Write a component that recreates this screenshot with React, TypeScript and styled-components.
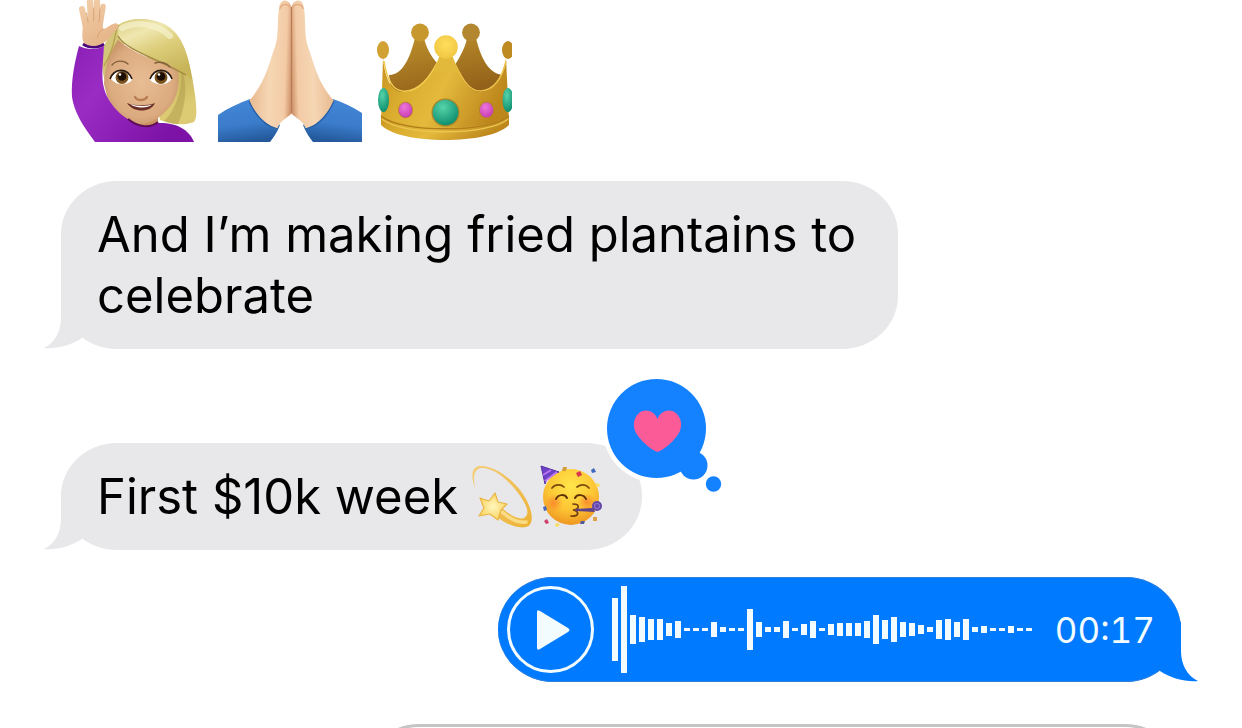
import React from "react";
import styled, { createGlobalStyle, css } from "styled-components";

const GlobalStyle = createGlobalStyle`
  *, *::before, *::after { box-sizing: border-box; }
  body {
    margin: 0;
    background: #ffffff;
    color: #000000;
    font-family: Inter, "Liberation Sans", sans-serif;
  }
`;

const Thread = styled.main`
  display: flex;
  flex-direction: column;
  align-items: flex-start;
  height: 100vh;
  overflow: hidden;
  padding: 0 61px;
`;

const EmojiRow = styled.div`
  display: flex;
  gap: 12px;
  margin: 0 1px 39px;
`;

const BigEmoji = styled.svg`
  display: block;
  width: 144px;
  height: 142px;
`;

const SmallEmoji = styled.svg`
  display: block;
  width: 66px;
  height: 66px;
`;

const bubbleShape = css`
  position: relative;
  flex: none;
  border-radius: 56px / 53px;
`;

const Received = styled.div<{ $gap: number }>`
  ${bubbleShape}
  display: flex;
  align-items: center;
  max-width: 837px;
  padding: 23px 36px;
  margin-bottom: ${(p) => p.$gap}px;
  background: #e8e8ea;
`;

const Message = styled.p`
  margin: 0;
  font-size: 49px;
  line-height: 61px;
`;

const InlineEmojis = styled.span`
  display: flex;
  gap: 3px;
  height: 61px;
  align-items: center;
  margin-left: 13px;
`;

const Voice = styled.div`
  ${bubbleShape}
  align-self: flex-end;
  display: flex;
  align-items: center;
  padding: 9px 26px 9px 9px;
  margin-bottom: 42px;
  background: #007aff;
  color: #f2fcff;
  box-shadow: inset 0 1px 0 #2f80dc, inset 0 -1px 0 #2f80dc;
`;

const Tail = styled.svg<{ $side: "left" | "right" }>`
  position: absolute;
  bottom: 0;
  width: 40px;
  height: 60px;
  ${(p) =>
    p.$side === "left"
      ? css`
          left: -18px;
          fill: #e8e8ea;
        `
      : css`
          right: -18px;
          fill: #007aff;
          transform: scaleX(-1);
        `}
`;

const Reaction = styled.svg`
  position: absolute;
  right: -82px;
  top: -70px;
  width: 124px;
  height: 124px;
`;

const PlayButton = styled.button`
  display: flex;
  align-items: center;
  justify-content: center;
  width: 87px;
  height: 87px;
  padding: 0;
  border: 3px solid #f2fcff;
  border-radius: 50%;
  background: transparent;
  color: inherit;
  cursor: pointer;
`;

const Wave = styled.svg`
  width: 420px;
  height: 87px;
  margin: 0 23px 0 18px;
  fill: #f2fcff;
`;

const Duration = styled.time`
  font-size: 35px;
  line-height: 44px;
  font-variant-numeric: tabular-nums;
`;

const Pending = styled.div`
  ${bubbleShape}
  align-self: flex-end;
  width: 73%;
  height: 106px;
  border: 3px solid #c4c4c6;
`;

const LEVELS = [
  63, 87, 29, 25, 21, 21, 13, 17, 3, 3, 3, 15, 5, 3, 3, 41, 15, 5, 5, 17, 3, 11,
  17, 3, 11, 13, 13, 13, 17, 29, 19, 25, 15, 13, 9, 5, 19, 21, 15, 21, 5, 7, 3,
  3, 7, 3, 3,
];

function BubbleTail({ side }: { side: "left" | "right" }) {
  return (
    <Tail $side={side} viewBox="0 0 40 60" aria-hidden="true">
      <path d="M18 0V29C18 42 12 54 1 59C13 60 27 57 39 49L40 0Z" />
    </Tail>
  );
}

function RaisedHand() {
  return (
    <BigEmoji viewBox="62 0 144 142" role="img" aria-label="Woman raising hand">
      <defs>
        <linearGradient id="sleeve" x1="0" y1="0" x2="1" y2="0.6">
          <stop offset="0" stopColor="#8b1fb4" />
          <stop offset="0.35" stopColor="#9a2cc4" />
          <stop offset="1" stopColor="#7d12a6" />
        </linearGradient>
        <radialGradient id="face" cx="0.5" cy="0.5" r="0.6">
          <stop offset="0" stopColor="#e8bd94" />
          <stop offset="0.7" stopColor="#dcab80" />
          <stop offset="1" stopColor="#c38f62" />
        </radialGradient>
        <linearGradient id="hair" x1="0" y1="0" x2="0.5" y2="1">
          <stop offset="0" stopColor="#d8ca7c" />
          <stop offset="0.3" stopColor="#efe7b0" />
          <stop offset="0.6" stopColor="#dccd7a" />
          <stop offset="1" stopColor="#c8b55a" />
        </linearGradient>
        <linearGradient id="lock" x1="0" y1="0" x2="0.3" y2="1">
          <stop offset="0" stopColor="#d9ca77" />
          <stop offset="0.6" stopColor="#c5b25a" />
          <stop offset="1" stopColor="#dccb72" />
        </linearGradient>
        <linearGradient id="hand" gradientUnits="userSpaceOnUse" x1="80" y1="0" x2="106" y2="46">
          <stop offset="0" stopColor="#f3cfaa" />
          <stop offset="1" stopColor="#e5b286" />
        </linearGradient>
      </defs>
      <path d="M104 46C109 36 114 28 124 28L124 110C108 94 102 80 102 60Z" fill="#d3c57a" />
      <path d="M118 25C137 13 168 20 180 40C188 55 192 72 195 95C197 110 197 118 194 122C182 127 168 123 160 120L150 60Z" fill="url(#lock)" />
      <path d="M181 67C183 85 178 108 164 121C168 123 174 124 178 124C186 106 188 84 181 67Z" fill="#a9954a" opacity="0.45" />
      <path d="M129 112H158V128H129Z" fill="#ca905e" />
      <path d="M104 84C105 67 108 55 118 40C132 52 155 62 177 66C181 82 178 99 167 110C157 121 147 124 140 124C126 123 112 109 107 96Z" fill="url(#face)" />
      <path d="M119 26C115 34 120 43 134 50C149 57 169 62 188 76L192 80C188 47 178 28 159 22C143 17 128 18 119 26Z" fill="url(#hair)" />
      <path d="M118 36C126 50 155 58 186 75" fill="none" stroke="#a0893f" strokeWidth="1.3" />
      <path d="M122 28C136 21 156 23 170 36" fill="none" stroke="#f9f5d6" strokeWidth="6" strokeLinecap="round" opacity="0.6" />
      <path d="M119 25C112 35 119 40 104 66" fill="none" stroke="#b7a24a" strokeWidth="1.3" />
      <path d="M79 46C87 50 97 50 104 46C103 62 101 77 104 88C107 101 119 115 130 120C141 129 153 127 158 123C173 122 189 128 194 142H95C83 126 74 112 72 97C71 79 75 61 79 46Z" fill="url(#sleeve)" />
      <path d="M128 119C139 128 151 128 158 122" fill="none" stroke="#5f0c58" strokeWidth="2" />
      <path d="M83 44C89 48 98 48 104 44" fill="none" stroke="#4c087b" strokeWidth="3" />
      <g stroke="url(#hand)" strokeLinecap="round" fill="none">
        <path d="M82 9L86 28" strokeWidth="6" />
        <path d="M90 2L91.500 26" strokeWidth="6.4" />
        <path d="M97 1.500L96.500 26" strokeWidth="6.2" />
        <path d="M103 6.500L99.500 28" strokeWidth="5.6" />
      </g>
      <path d="M83 22C83 30 81 38 84 43C90 47 97 47 103 43C108 41 112 34 117 29C120 25 117 22 113 24C108 26 106 29 103 29L102 20Z" fill="url(#hand)" />
      <path d="M86.500 13L88 22M93.700 8V21M100 9L99 22M103 29C100 31 98 34 97 38" fill="none" stroke="#d6a376" strokeWidth="1" strokeLinecap="round" />
      <path d="M112 65C116 60 124 60 128 64M155 63C160 61 167 63 170 67" fill="none" stroke="#83603c" strokeWidth="1.4" strokeLinecap="round" />
      <path d="M111 79C115 68 128 68 132 80C127 86 116 86 111 79Z" fill="#ffffff" />
      <path d="M150 80C154 68 167 68 172 79C167 86 156 86 150 80Z" fill="#ffffff" />
      <circle cx="122" cy="77.500" r="6.400" fill="#7a521d" />
      <circle cx="161" cy="77.500" r="6.400" fill="#7a521d" />
      <circle cx="122" cy="76.500" r="4.300" fill="#1d0e05" />
      <circle cx="161" cy="76.500" r="4.300" fill="#1d0e05" />
      <circle cx="120" cy="74.500" r="1.300" fill="#ffffff" />
      <circle cx="159" cy="74.500" r="1.300" fill="#ffffff" />
      <path d="M110 79C114 68 127 67 132 79M150 79C155 67 168 68 172 79" fill="none" stroke="#2a1b12" strokeWidth="1.6" />
      <path d="M135 97C137 101 145 101 147 97" fill="none" stroke="#b97d52" strokeWidth="2.4" strokeLinecap="round" />
      <path d="M127 103C134 106 148 106 155 103C151 113 133 113 127 103Z" fill="#6d3026" />
      <path d="M130 104C136 106.500 148 106.500 152 104.500C148 108.500 135 108.500 130 104Z" fill="#ffffff" />
    </BigEmoji>
  );
}

function PrayingHands() {
  const half = (
    <>
      <path d="M218 115C228 108 239 103 250 99L280 125C277 133 273 138 270 142H218Z" fill="url(#cuff)" />
      <path d="M292 9C290 -2 280 -2 279 8C277 22 279 35 275 47C269 62 267 80 249 101C255 113 265 125 277 129C280 120 289 117 292 113Z" fill="url(#palm)" />
      <path d="M280 9C281 3 289 3 291 9" fill="none" stroke="#e3ae86" strokeWidth="1.5" />
      <path d="M249 101C255 115 264 126 278 129" fill="none" stroke="#285e9f" strokeWidth="1.2" />
    </>
  );
  return (
    <BigEmoji viewBox="218 0 144 142" role="img" aria-label="Folded hands">
      <defs>
        <linearGradient id="cuff" x1="0.2" y1="0" x2="0.4" y2="1">
          <stop offset="0" stopColor="#4387d8" />
          <stop offset="0.6" stopColor="#3b7ccb" />
          <stop offset="1" stopColor="#245a9c" />
        </linearGradient>
        <linearGradient id="palm" x1="0" y1="0.4" x2="1" y2="0.5">
          <stop offset="0" stopColor="#e6b68c" />
          <stop offset="0.5" stopColor="#f6d6b4" />
          <stop offset="0.85" stopColor="#f3cba6" />
          <stop offset="1" stopColor="#d0956c" />
        </linearGradient>
      </defs>
      <g>{half}</g>
      <g transform="translate(583 0) scale(-1 1)">{half}</g>
      <path d="M291.500 7V113" stroke="#b97c56" strokeWidth="1.2" />
    </BigEmoji>
  );
}

function Crown() {
  return (
    <BigEmoji viewBox="374 0 144 142" role="img" aria-label="Crown">
      <defs>
        <linearGradient id="gold" x1="0" y1="0" x2="1" y2="0.3">
          <stop offset="0" stopColor="#c79320" />
          <stop offset="0.3" stopColor="#dbae30" />
          <stop offset="0.55" stopColor="#e4b93c" />
          <stop offset="1" stopColor="#bd871c" />
        </linearGradient>
        <linearGradient id="goldBack" x1="0" y1="0" x2="0.4" y2="1">
          <stop offset="0" stopColor="#bd902b" />
          <stop offset="1" stopColor="#93621a" />
        </linearGradient>
        <radialGradient id="orb" cx="0.5" cy="0.4" r="0.6">
          <stop offset="0" stopColor="#ffdf5d" />
          <stop offset="1" stopColor="#f0c643" />
        </radialGradient>
        <radialGradient id="emerald" cx="0.4" cy="0.3" r="0.7">
          <stop offset="0" stopColor="#55d3a9" />
          <stop offset="1" stopColor="#109070" />
        </radialGradient>
        <radialGradient id="ruby" cx="0.4" cy="0.3" r="0.7">
          <stop offset="0" stopColor="#ee75dc" />
          <stop offset="1" stopColor="#c840b4" />
        </radialGradient>
      </defs>
      <path d="M389 75C404 75 411 54 415 38H424C427 51 434 60 439 65L428 96H392ZM504 75C488 75 480 55 476 38H467C465 49 459 58 455 65L469 96H500Z" fill="url(#goldBack)" />
      <circle cx="420" cy="32.500" r="8.900" fill="#c7982e" />
      <circle cx="471" cy="32.500" r="8.900" fill="#b28730" />
      <ellipse cx="383" cy="50" rx="6" ry="9" fill="#d2a133" />
      <ellipse cx="508" cy="50" rx="6" ry="9" fill="#bd8b22" />
      <path d="M383 58C385 78 391 91 402 92C421 94 433 69 440 58H452C460 74 467 93 481 92C494 91 504 78 506 58L509 121C489 139 401 139 381 121Z" fill="url(#gold)" />
      <path d="M384 61C387 80 393 90 402 91C420 93 431 74 437 63" fill="none" stroke="#f2cc50" strokeWidth="1.5" />
      <path d="M455 64C462 78 469 92 481 91C494 90 502 78 506 61" fill="none" stroke="#edc24b" strokeWidth="1.5" />
      <path d="M440 55H452L459 72H433Z" fill="#e3b93c" />
      <circle cx="446" cy="47" r="11.800" fill="url(#orb)" />
      <path d="M381 115C400 132 490 132 509 115V125C490 145 400 145 381 125Z" fill="url(#gold)" />
      <path d="M381 116C400 133 490 133 509 116" fill="none" stroke="#b07c1c" strokeWidth="1.3" />
      <path d="M382 119C401 136 489 136 508 119" fill="none" stroke="#ebc650" strokeWidth="1.3" />
      <ellipse cx="383.500" cy="100" rx="5.500" ry="12" fill="url(#emerald)" />
      <ellipse cx="508" cy="100" rx="5.500" ry="12" fill="url(#emerald)" />
      <circle cx="445.500" cy="112.500" r="14" fill="#a8852a" />
      <circle cx="445.500" cy="112.500" r="12.800" fill="url(#emerald)" />
      <ellipse cx="405.500" cy="110" rx="7.500" ry="8.300" fill="#b37f2c" />
      <ellipse cx="486.500" cy="110" rx="7.500" ry="8.300" fill="#b37f2c" />
      <ellipse cx="405.500" cy="110" rx="6.700" ry="7.500" fill="url(#ruby)" />
      <ellipse cx="486.500" cy="110" rx="6.700" ry="7.500" fill="url(#ruby)" />
      <path d="M512 38H518V130H512Z" fill="#ffffff" />
    </BigEmoji>
  );
}

function DizzyStar() {
  return (
    <SmallEmoji viewBox="471 462 66 66" role="img" aria-label="Dizzy">
      <defs>
        <linearGradient id="trail" x1="0" y1="0" x2="1" y2="1">
          <stop offset="0" stopColor="#f3cd78" />
          <stop offset="1" stopColor="#edb234" />
        </linearGradient>
        <radialGradient id="star" cx="0.5" cy="0.5" r="0.5">
          <stop offset="0" stopColor="#fff6bf" />
          <stop offset="1" stopColor="#f9d565" />
        </radialGradient>
      </defs>
      <path d="M475 486C471 475 471 465 480 464C496 463 518 481 527 499C534 513 533 524 526 525C518 527 505 522 496 514L502 506C511 514 519 518 524 516C529 513 528 507 524 500C514 482 495 465 481 466C474 467 473 475 475 486Z" fill="url(#trail)" />
      <path d="M502 510C510 517 519 521 526 520" stroke="#f9dc85" strokeWidth="3.5" fill="none" strokeLinecap="round" />
      <path d="M495 491L498 500L507 502L501 508L498 518L490 512L479 514L484 506L480 496L489 499Z" fill="url(#star)" stroke="#eab544" strokeWidth="1.2" strokeLinejoin="round" />
    </SmallEmoji>
  );
}

function PartyFace() {
  return (
    <SmallEmoji viewBox="540 462 66 66" role="img" aria-label="Partying face">
      <defs>
        <radialGradient id="partyFace" cx="0.5" cy="0.3" r="0.7">
          <stop offset="0" stopColor="#ffe64a" />
          <stop offset="0.6" stopColor="#fdc634" />
          <stop offset="1" stopColor="#ee9622" />
        </radialGradient>
        <radialGradient id="blush">
          <stop offset="0" stopColor="#f8752b" stopOpacity="0.7" />
          <stop offset="1" stopColor="#f8752b" stopOpacity="0" />
        </radialGradient>
      </defs>
      <circle cx="571" cy="495" r="28" fill="url(#partyFace)" />
      <circle cx="554" cy="501" r="9" fill="url(#blush)" />
      <circle cx="587" cy="500" r="9" fill="url(#blush)" />
      <path d="M541 464L559 470C552 472 547 475 545 482Z" fill="#6e42c8" stroke="#5531a6" strokeWidth="1" />
      <path d="M543 473L551 468M545 479L557 470" stroke="#bc75ec" strokeWidth="2" />
      <path d="M552 486C555 482 561 482 564 485M577 485C581 482 586 482 589 486" fill="none" stroke="#7b4a0d" strokeWidth="1.7" strokeLinecap="round" />
      <path d="M556 497C558 492 565 492 567 496M575 496C577 492 584 492 586 497" fill="none" stroke="#5e3306" strokeWidth="2" strokeLinecap="round" />
      <path d="M573 502C580 502 580 507 573 508C580 509 579 515 571 514" fill="none" stroke="#71410e" strokeWidth="1.700" strokeLinecap="round" />
      <path d="M575 507L593 506L595 510L576 509Z" fill="#60418b" />
      <circle cx="597" cy="504" r="5" fill="#6447a7" />
      <circle cx="597" cy="504" r="2.500" fill="none" stroke="#8f71cc" strokeWidth="1.200" />
      <path d="M576 471L580 469L582 473L578 475Z" fill="#d9344c" />
      <path d="M591 468L594 466L596 470L592 471Z" fill="#3e69bd" />
      <path d="M544 519L547 517L549 521L546 522Z" fill="#ce3f6b" />
      <path d="M563 465L567 465L566 469L562 469Z" fill="#d69c34" />
      <path d="M593 515L597 515L597 519L593 519Z" fill="#dfa149" />
      <path d="M543 505L546 504L547 508L544 509Z" fill="#4b65b7" />
      <path d="M581 519L585 519L584 522L580 522Z" fill="#4e5c9a" />
      <path d="M596 481L600 482L599 485L596 485ZM556 521L560 522L558 525L555 524Z" fill="#f7df63" />
    </SmallEmoji>
  );
}

function HeartReaction() {
  return (
    <Reaction viewBox="600 373 124 124" role="img" aria-label="Loved">
      <circle cx="656.500" cy="428.500" r="54" fill="#ffffff" />
      <g fill="#1482ff">
        <circle cx="656.500" cy="428.500" r="49.500" />
        <circle cx="693.500" cy="465.500" r="14" />
        <circle cx="713.500" cy="484" r="7.700" />
      </g>
      <path d="M657.500 419C654 410 644 408 638 414C632 420 633 430 638 436C643 443 652 450 657.500 452C663 450 672 443 677 436C682 430 683 420 677 414C671 408 661 410 657.500 419Z" fill="#fb5c98" />
    </Reaction>
  );
}

export default function App() {
  return (
    <>
      <GlobalStyle />
      <Thread>
        <EmojiRow>
          <RaisedHand />
          <PrayingHands />
          <Crown />
        </EmojiRow>
        <Received $gap={94}>
          <BubbleTail side="left" />
          <Message>And I’m making fried plantains to celebrate</Message>
        </Received>
        <Received $gap={27}>
          <BubbleTail side="left" />
          <Message>First $10k week</Message>
          <InlineEmojis>
            <DizzyStar />
            <PartyFace />
          </InlineEmojis>
          <HeartReaction />
        </Received>
        <Voice>
          <BubbleTail side="right" />
          <PlayButton type="button" aria-label="Play voice message">
            <svg width="40" height="40" viewBox="0 0 40 40" fill="currentColor" aria-hidden="true">
              <path d="M7 2Q7 -1 10 1L38 18Q41 20 38 22L10 39Q7 41 7 38Z" />
            </svg>
          </PlayButton>
          <Wave viewBox="0 0 420 87" aria-hidden="true">
            {LEVELS.map((level, i) => (
              <rect key={i} x={i * 9} y={(87 - level) / 2} width="6" height={level} />
            ))}
          </Wave>
          <Duration dateTime="PT17S">00:17</Duration>
        </Voice>
        <Pending />
      </Thread>
    </>
  );
}
